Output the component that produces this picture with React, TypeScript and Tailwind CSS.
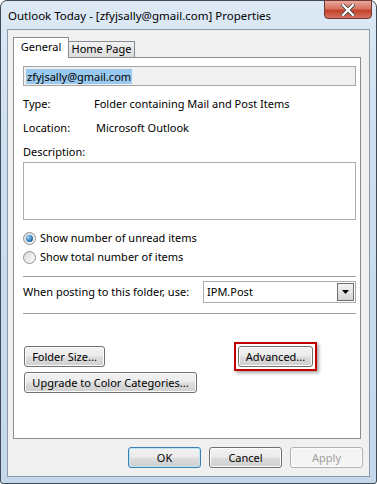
import React from "react";

const font = { fontFamily: '"Segoe UI", "Noto Sans", "Open Sans", sans-serif' };

function Btn({ children, className = "", disabled = false, primary = false }: { children: React.ReactNode; className?: string; disabled?: boolean; primary?: boolean }) {
    const border = disabled ? "border-[#adb2b5]" : primary ? "border-[#3c7fb1]" : "border-[#707070]";
    const bg = disabled
        ? "bg-[#f4f4f4]"
        : "bg-[linear-gradient(#f2f2f2_0%,#ebebeb_48%,#dddddd_52%,#cfcfcf_100%)]";
    return (
        <div
            className={`h-[21px] flex items-center justify-center whitespace-nowrap rounded-[3px] border ${border} ${bg} text-[11px] leading-none ${disabled ? "text-[#a0a0a0]" : "text-black"} ${primary ? "shadow-[inset_0_0_0_1px_#bde3f6]" : "shadow-[inset_0_0_0_1px_#fcfcfc]"} ${className}`}
        >
            {children}
        </div>
    );
}

function Radio({ checked, label }: { checked?: boolean; label: string }) {
    return (
        <div className="flex items-center gap-[4px] h-[19px]">
            <div className="w-[13px] h-[13px] rounded-full border border-[#8e8f8f] bg-[linear-gradient(135deg,#d6d6d6,#ffffff)] flex items-center justify-center">
                {checked && <div className="w-[7px] h-[7px] rounded-full bg-[radial-gradient(circle_at_35%_35%,#9bd1f7,#1c65a8_70%)]" />}
            </div>
            <span>{label}</span>
        </div>
    );
}

export default function App() {
    return (
        <div style={font} className="w-[377px] h-[484px] text-[11px] text-black overflow-hidden bg-white whitespace-nowrap">
            <div className="w-full h-full rounded-t-[7px] rounded-b-[3px] border border-[#3f4a55] bg-[linear-gradient(180deg,#dde9f5_0%,#cddff0_30%,#c4d8ec_100%)] flex flex-col px-[6px] pb-[6px]">
                {/* title bar */}
                <div className="h-[28px] flex items-start justify-between">
                    <span className="pl-[1px] pt-[7px] text-[11.5px] leading-[16px] text-black">Outlook Today - [zfyjsally@gmail.com] Properties</span>
                    <div className="w-[48px] h-[19px] -mt-[1px] mr-[-2px] rounded-b-[4px] border border-[#6f3a35] bg-[linear-gradient(180deg,#e9a99c_0%,#d6735f_45%,#c3422a_55%,#d4735e_100%)] flex items-center justify-center">
                        <svg width="14" height="12" viewBox="0 0 14 12">
                            <path d="M2 1 L12 11 M12 1 L2 11" stroke="#4a4a4a" strokeWidth="4" strokeLinecap="square" />
                            <path d="M2 1 L12 11 M12 1 L2 11" stroke="#ffffff" strokeWidth="2.2" strokeLinecap="square" />
                        </svg>
                    </div>
                </div>
                {/* client */}
                <div className="flex-1 border border-[#8c9aab] bg-[#f0f0f0] flex flex-col px-[5px] pt-[6px]">
                    {/* tabs */}
                    <div className="flex items-end h-[21px]">
                        <div className="h-[21px] w-[56px] border border-b-0 border-[#898c95] bg-white flex items-center justify-center pb-[1px] relative z-10 -mb-[1px]">General</div>
                        <div className="h-[16px] w-[66px] border border-l-0 border-b-0 border-[#898c95] bg-[linear-gradient(#f2f2f2,#dcdcdc)] flex items-center justify-center">Home Page</div>
                    </div>
                    <div className="h-[382px] w-[348px] border border-[#898c95] bg-white flex flex-col pl-[9px] pr-[4px] pt-[8px]">
                        <div className="h-[20px] w-[333px] border border-[#a5a5a5] bg-[#f0f0f0] flex items-center pl-[2px]">
                            <span className="bg-[#99c9ef] leading-[15px] px-[1px]">zfyjsally@gmail.com</span>
                        </div>
                        <div className="flex mt-[11px] h-[15px] items-center">
                            <span className="w-[71px]">Type:</span>
                            <span>Folder containing Mail and Post Items</span>
                        </div>
                        <div className="flex mt-[9px] h-[15px] items-center">
                            <span className="w-[73px]">Location:</span>
                            <span>Microsoft Outlook</span>
                        </div>
                        <div className="flex mt-[9px] h-[15px] items-center">Description:</div>
                        <div className="mt-[2px] h-[58px] w-[333px] border border-[#abadb3] bg-white" />
                        <div className="mt-[9px]">
                            <Radio checked label="Show number of unread items" />
                            <Radio label="Show total number of items" />
                        </div>
                        <div className="mt-[9px] w-[333px] h-px bg-[#a0a0a0]" />
                        <div className="mt-[4px] flex items-center w-[333px] h-[22px]">
                            <span className="w-[180px]">When posting to this folder, use:</span>
                            <div className="flex-1 h-[22px] border border-[#abadb3] bg-white flex items-center justify-between pl-[3px] pr-[1px]">
                                <span>IPM.Post</span>
                                <div className="w-[17px] h-[18px] border border-[#707070] bg-[linear-gradient(#f2f2f2,#d4d4d4)] flex items-center justify-center">
                                    <svg width="7" height="4" viewBox="0 0 7 4"><path d="M0 0 H7 L3.5 4 Z" fill="#000" /></svg>
                                </div>
                            </div>
                        </div>
                        <div className="mt-[10px] w-[333px] h-px bg-[#a0a0a0]" />
                        <div className="mt-[28px] flex items-center w-[333px]">
                            <Btn className="w-[81px] ml-[1px]">Folder Size...</Btn>
                            <div className="ml-[129px] w-[83px] h-[29px] border-2 border-[#c00000] shadow-[2px_2px_3px_rgba(0,0,0,0.35)] flex items-center justify-center">
                                <Btn className="w-[75px]">Advanced...</Btn>
                            </div>
                        </div>
                        <Btn className="w-[173px] ml-[1px] mt-[1px]">Upgrade to Color Categories...</Btn>
                    </div>
                    <div className="flex justify-end gap-[8px] mt-[8px] pr-[1px]">
                        <Btn primary className="w-[73px]">OK</Btn>
                        <Btn className="w-[73px]">Cancel</Btn>
                        <Btn disabled className="w-[73px]">Apply</Btn>
                    </div>
                </div>
            </div>
        </div>
    );
}
